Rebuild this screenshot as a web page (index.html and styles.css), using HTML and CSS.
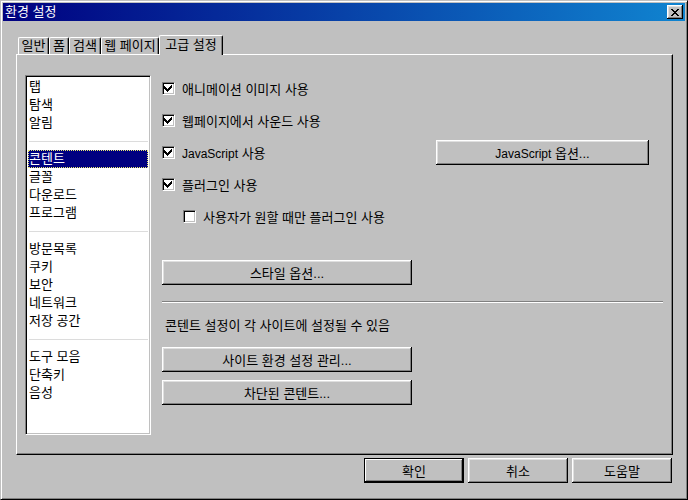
FILE: index.html
```html
<!DOCTYPE html>
<html lang="ko">
<head>
  <meta charset="UTF-8">
  <title>환경 설정</title>
  <link rel="stylesheet" href="styles.css">
</head>
<body>

<div class="window">
  <div class="titlebar">
    <span class="title">환경 설정</span>
    <button class="close" type="button">
      <svg width="8" height="7" viewBox="0 0 8 7">
        <path d="M0 0h2v1h-2zM6 0h2v1h-2zM1 1h2v1h-2zM5 1h2v1h-2zM2 2h4v1h-4zM3 3h2v1h-2zM2 4h4v1h-4zM1 5h2v1h-2zM5 5h2v1h-2zM0 6h2v1h-2zM6 6h2v1h-2z" fill="#000"/>
      </svg>
    </button>
  </div>

  <div class="dialog-body">
    <!-- Tabs -->
    <div class="tabs">
      <div class="tab tab-1">일반</div>
      <div class="tab tab-2">폼</div>
      <div class="tab tab-3">검색</div>
      <div class="tab tab-4">웹 페이지</div>
      <div class="tab active">고급 설정</div>
    </div>

    <div class="panel">
      <ul class="list">
        <li>탭</li>
        <li>탐색</li>
        <li>알림</li>
        <li class="sep"></li>
        <li class="selected">콘텐트</li>
        <li>글꼴</li>
        <li>다운로드</li>
        <li>프로그램</li>
        <li class="sep"></li>
        <li>방문목록</li>
        <li>쿠키</li>
        <li>보안</li>
        <li>네트워크</li>
        <li>저장 공간</li>
        <li class="sep"></li>
        <li>도구 모음</li>
        <li>단축키</li>
        <li>음성</li>
      </ul>

      <div class="content">
        <div class="row">
          <span class="check checked"></span><span>애니메이션 이미지 사용</span>
        </div>
        <div class="row">
          <span class="check checked"></span><span>웹페이지에서 사운드 사용</span>
        </div>
        <div class="row">
          <span class="check checked"></span><span><span class="latin">JavaScript</span> 사용</span>
          <button class="btn btn-js" type="button"><span class="latin">JavaScript</span> 옵션...</button>
        </div>
        <div class="row">
          <span class="check checked"></span><span>플러그인 사용</span>
        </div>
        <div class="row indent">
          <span class="check"></span><span>사용자가 원할 때만 플러그인 사용</span>
        </div>

        <button class="btn btn-wide btn-style" type="button">스타일 옵션...</button>

        <div class="divider"></div>

        <p class="note">콘텐트 설정이 각 사이트에 설정될 수 있음</p>

        <button class="btn btn-wide btn-sites" type="button">사이트 환경 설정 관리...</button>
        <button class="btn btn-wide btn-blocked" type="button">차단된 콘텐트...</button>
      </div>
    </div>

    <div class="footer">
      <button class="btn btn-foot default" type="button">확인</button>
      <button class="btn btn-foot" type="button">취소</button>
      <button class="btn btn-foot" type="button">도움말</button>
    </div>
  </div>
</div>

</body>
</html>
```

FILE: styles.css
```css
/* Classic Windows style dialog */
* {
  box-sizing: border-box;
}

body {
  margin: 0;
  font-family: "Liberation Sans", "Noto Sans CJK KR", sans-serif;
  font-size: 13px;
  color: #000;
  background: #c0c0c0;
}

.latin {
  font-size: 12px;
}

.window {
  width: 688px;
  height: 500px;
  background: #c0c0c0;
  border: 1px solid;
  border-color: #c0c0c0 #000 #000 #c0c0c0;
  box-shadow: inset 1px 1px #fff, inset -1px -1px #808080;
  padding: 2px 2px 2px 2px;
}

.titlebar {
  height: 18px;
  display: flex;
  align-items: center;
  padding: 0 2px 0 2px;
  background: linear-gradient(to right, #000080, #1084d0);
  color: #fff;
}

.title {
  flex: 1;
  line-height: 18px;
}

.close {
  width: 16px;
  height: 14px;
  padding: 0;
  border: none;
  background: #c0c0c0;
  display: flex;
  align-items: center;
  justify-content: center;
  box-shadow: inset -1px -1px #000, inset 1px 1px #fff, inset -2px -2px #808080, inset 2px 2px #dfdfdf;
}

.close svg {
  display: block;
  margin: 0 1px 0 0;
}

.dialog-body {
  padding: 14px 12px 0 13px;
}

/* Tabs */
.tabs {
  display: flex;
  align-items: flex-end;
  height: 19px;
  padding-left: 2px;
}

.tab {
  height: 17px;
  line-height: 16px;
  text-align: center;
  background: #c0c0c0;
  border-top: 1px solid #fff;
  border-left: 1px solid #fff;
  border-right: 1px solid #000;
  border-radius: 2px 2px 0 0;
  box-shadow: inset -1px 0 #808080;
  white-space: nowrap;
}

.tab-1 { width: 31px; }
.tab-2 { width: 20px; }
.tab-3 { width: 32px; }
.tab-4 { width: 58px; }

.tab.active {
  width: 64px;
  height: 20px;
  line-height: 17px;
  margin-bottom: -1px;
  position: relative;
  z-index: 1;
}

/* Panel */
.panel {
  height: 401px;
  width: 657px;
  display: flex;
  align-items: flex-start;
  padding: 17px 9px 0 8px;
  border: 1px solid;
  border-color: #fff #000 #000 #fff;
  box-shadow: inset -1px -1px #808080;
}

.list {
  list-style: none;
  margin: 3px 0 0 0;
  padding: 2px;
  width: 126px;
  height: 360px;
  flex: none;
  background: #fff;
  border: 1px solid;
  border-color: #808080 #fff #fff #808080;
  box-shadow: inset 1px 1px #000, inset -1px -1px #c0c0c0;
}

.list li {
  height: 18px;
  line-height: 18px;
  padding-left: 1px;
  white-space: nowrap;
}

.list li.sep {
  display: flex;
  align-items: center;
}

.list li.sep::after {
  content: "";
  flex: 1;
  height: 1px;
  background: #dcdcdc;
}

.list li.selected {
  background: #000080;
  color: #fff;
  border: 1px dotted #e8e870;
  line-height: 16px;
  padding-left: 0;
}

.content {
  flex: 1;
  margin-left: 11px;
  display: flex;
  flex-direction: column;
  align-items: flex-start;
}

.row {
  height: 32px;
  width: 100%;
  display: flex;
  align-items: center;
}

.row.indent {
  padding-left: 21px;
}

.check {
  width: 13px;
  height: 13px;
  flex: none;
  margin-right: 7px;
  background: #fff;
  border: 1px solid;
  border-color: #808080 #fff #fff #808080;
  box-shadow: inset 1px 1px #000, inset -1px -1px #c0c0c0;
}

.check.checked {
  background: #fff url("data:image/svg+xml;utf8,<svg xmlns='http://www.w3.org/2000/svg' width='11' height='11' viewBox='0 0 11 11'><path d='M8 2h1v3h-1v1h-1v1h-1v1h-1v1h-1v-1h-1v-1h-1v-1h-1v-3h1v1h1v1h1v1h1v-1h1v-1h1v-1h1z' fill='black'/></svg>") no-repeat 0 0;
}

/* Buttons */
.btn {
  height: 25px;
  padding: 0;
  border: none;
  background: #c0c0c0;
  font-family: inherit;
  font-size: 13px;
  color: #000;
  box-shadow: inset -1px -1px #000, inset 1px 1px #fff, inset -2px -2px #808080, inset 2px 2px #dfdfdf;
}

.btn-js {
  width: 213px;
  margin-left: auto;
  margin-right: 14px;
}

.btn-wide {
  width: 250px;
}

.btn-style {
  margin-top: 28px;
}

.divider {
  width: 100%;
  height: 2px;
  margin-top: 16px;
  border-top: 1px solid #808080;
  border-bottom: 1px solid #fff;
}

.note {
  margin: 14px 0 0 3px;
  line-height: 18px;
}

.btn-sites {
  margin-top: 12px;
}

.btn-blocked {
  margin-top: 8px;
}

.footer {
  display: flex;
  justify-content: flex-end;
  gap: 4px;
  margin-top: 3px;
  padding-right: 1px;
}

.btn-foot {
  width: 100px;
}

.btn.default {
  border: 1px solid #000;
  box-shadow: inset -1px -1px #000, inset 1px 1px #fff, inset -2px -2px #808080;
}
```
